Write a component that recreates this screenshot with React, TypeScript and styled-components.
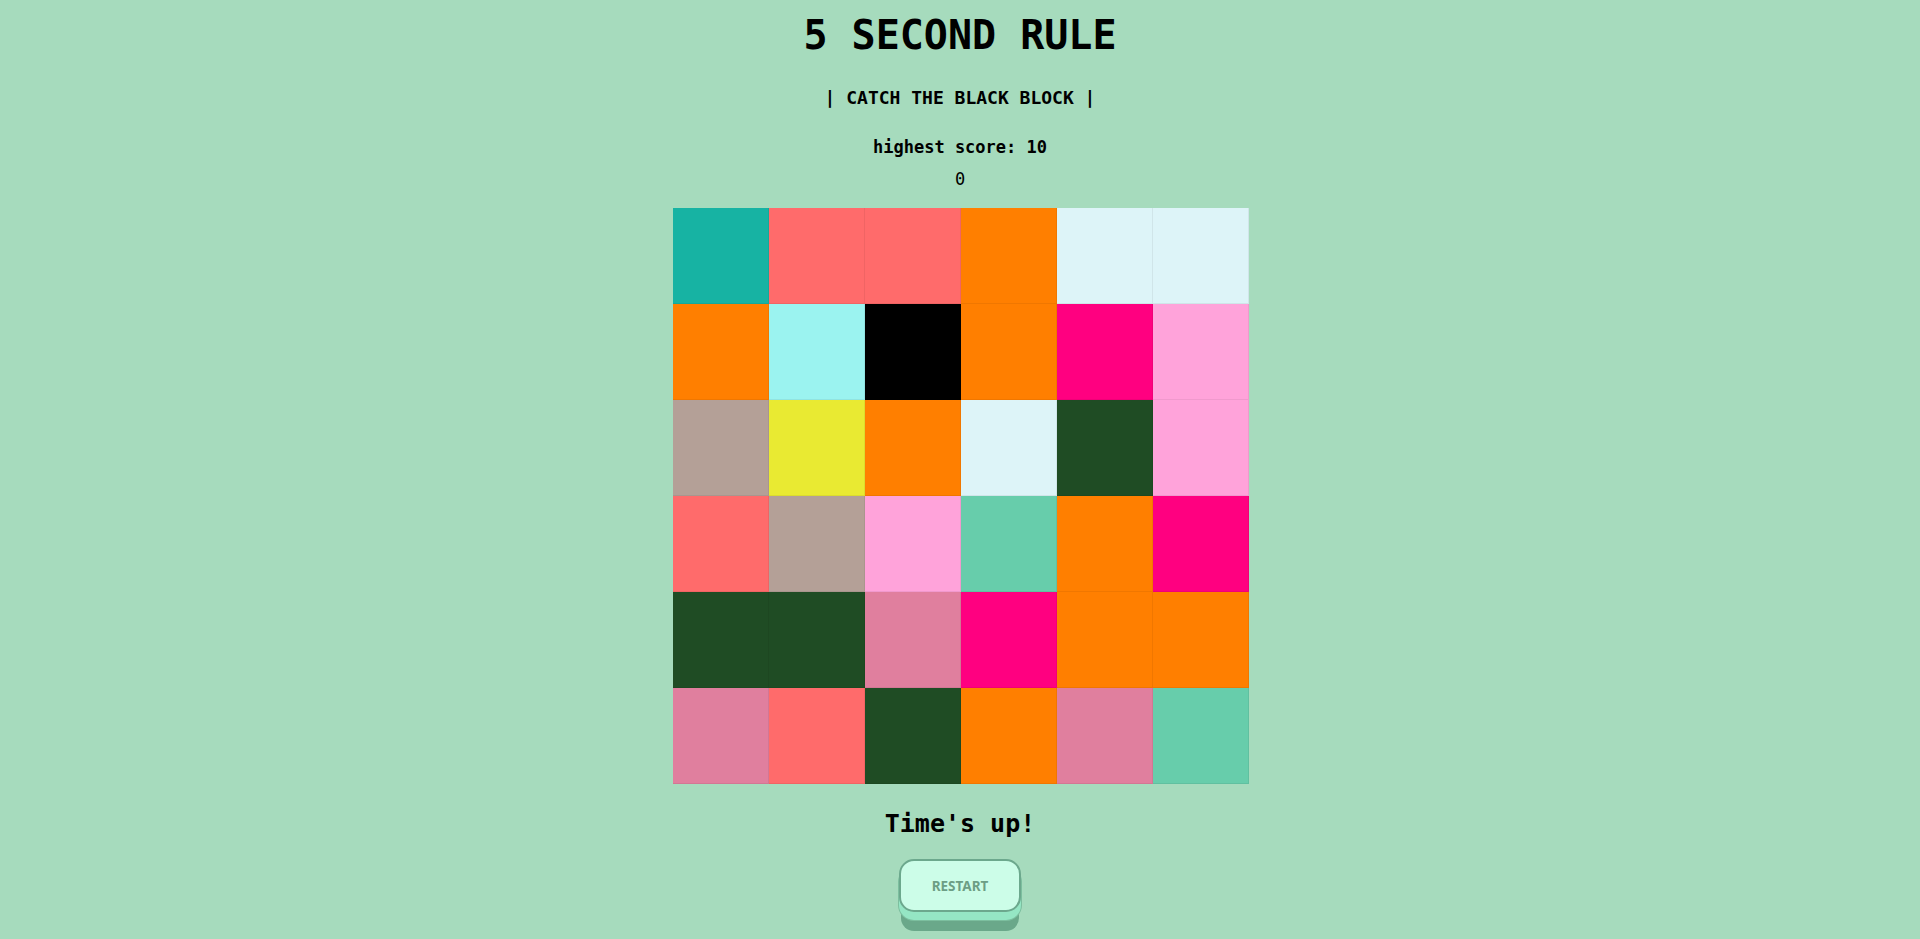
import React from "react";
import styled, { createGlobalStyle } from "styled-components";

const GlobalStyle = createGlobalStyle`
  html, body {
    margin: 0;
    padding: 0;
    background: #a6dbbd;
  }
  body {
    font-family: "DejaVu Sans Mono", "Liberation Mono", monospace;
    color: #000;
  }
`;

const Page = styled.main`
  display: flex;
  flex-direction: column;
  align-items: center;
  min-height: 939px;
  padding-top: 11px;
  box-sizing: border-box;
`;

const Title = styled.h1`
  margin: 0;
  font-size: 40px;
  line-height: 48px;
  font-weight: 700;
  letter-spacing: 0;
`;

const Subtitle = styled.h3`
  margin: 27px 0 0;
  font-size: 18px;
  line-height: 24px;
  font-weight: 700;
`;

const HighScore = styled.div`
  margin-top: 27px;
  font-size: 17px;
  line-height: 20px;
  font-weight: 700;
`;

const Score = styled.div`
  margin-top: 12px;
  font-size: 17px;
  line-height: 20px;
  font-weight: 400;
`;

const Board = styled.div`
  margin-top: 19px;
  display: grid;
  grid-template-columns: repeat(6, 96px);
  grid-auto-rows: 96px;
  margin-left: 1px;
`;

const Cell = styled.div<{ $color: string }>`
  background: ${(p) => p.$color};
  box-sizing: border-box;
  border-right: 1px solid rgba(0, 0, 0, 0.06);
  border-bottom: 1px solid rgba(0, 0, 0, 0.06);
`;

const Status = styled.h2`
  margin: 25px 0 0;
  font-size: 25px;
  line-height: 30px;
  font-weight: 700;
`;

const RestartButton = styled.button`
  margin-top: 20px;
  width: 122px;
  height: 53px;
  border: 2px solid #6ca88d;
  border-radius: 15px;
  background: #ccfde8;
  color: #6c9e85;
  font-family: "Noto Sans", "Open Sans", sans-serif;
  font-weight: 700;
  font-size: 13.5px;
  letter-spacing: 0;
  cursor: pointer;
  box-shadow: 0 8px 0 0 #95e6c4, 0 8px 0 1px #7cbf9f, 0 21px 0 -2px #6aa88a;
`;

const O = "#ff7f00";
const C = "#ff6b6b";
const T = "#17b3a3";
const L = "#ddf4f8";
const A = "#9bf3f0";
const K = "#000000";
const M = "#ff0080";
const P = "#ffa3da";
const G = "#b4a097";
const Y = "#e9ea32";
const D = "#1f4c24";
const S = "#67cdab";
const R = "#e07f9e";

const cells = [
  T, C, C, O, L, L,
  O, A, K, O, M, P,
  G, Y, O, L, D, P,
  C, G, P, S, O, M,
  D, D, R, M, O, O,
  R, C, D, O, R, S,
];

export default function App() {
  return (
    <>
      <GlobalStyle />
      <Page>
        <Title>5 SECOND RULE</Title>
        <Subtitle>| CATCH THE BLACK BLOCK |</Subtitle>
        <HighScore>highest score: 10</HighScore>
        <Score>0</Score>
        <Board>
          {cells.map((c, i) => (
            <Cell key={i} $color={c} />
          ))}
        </Board>
        <Status>Time's up!</Status>
        <RestartButton>RESTART</RestartButton>
      </Page>
    </>
  );
}
